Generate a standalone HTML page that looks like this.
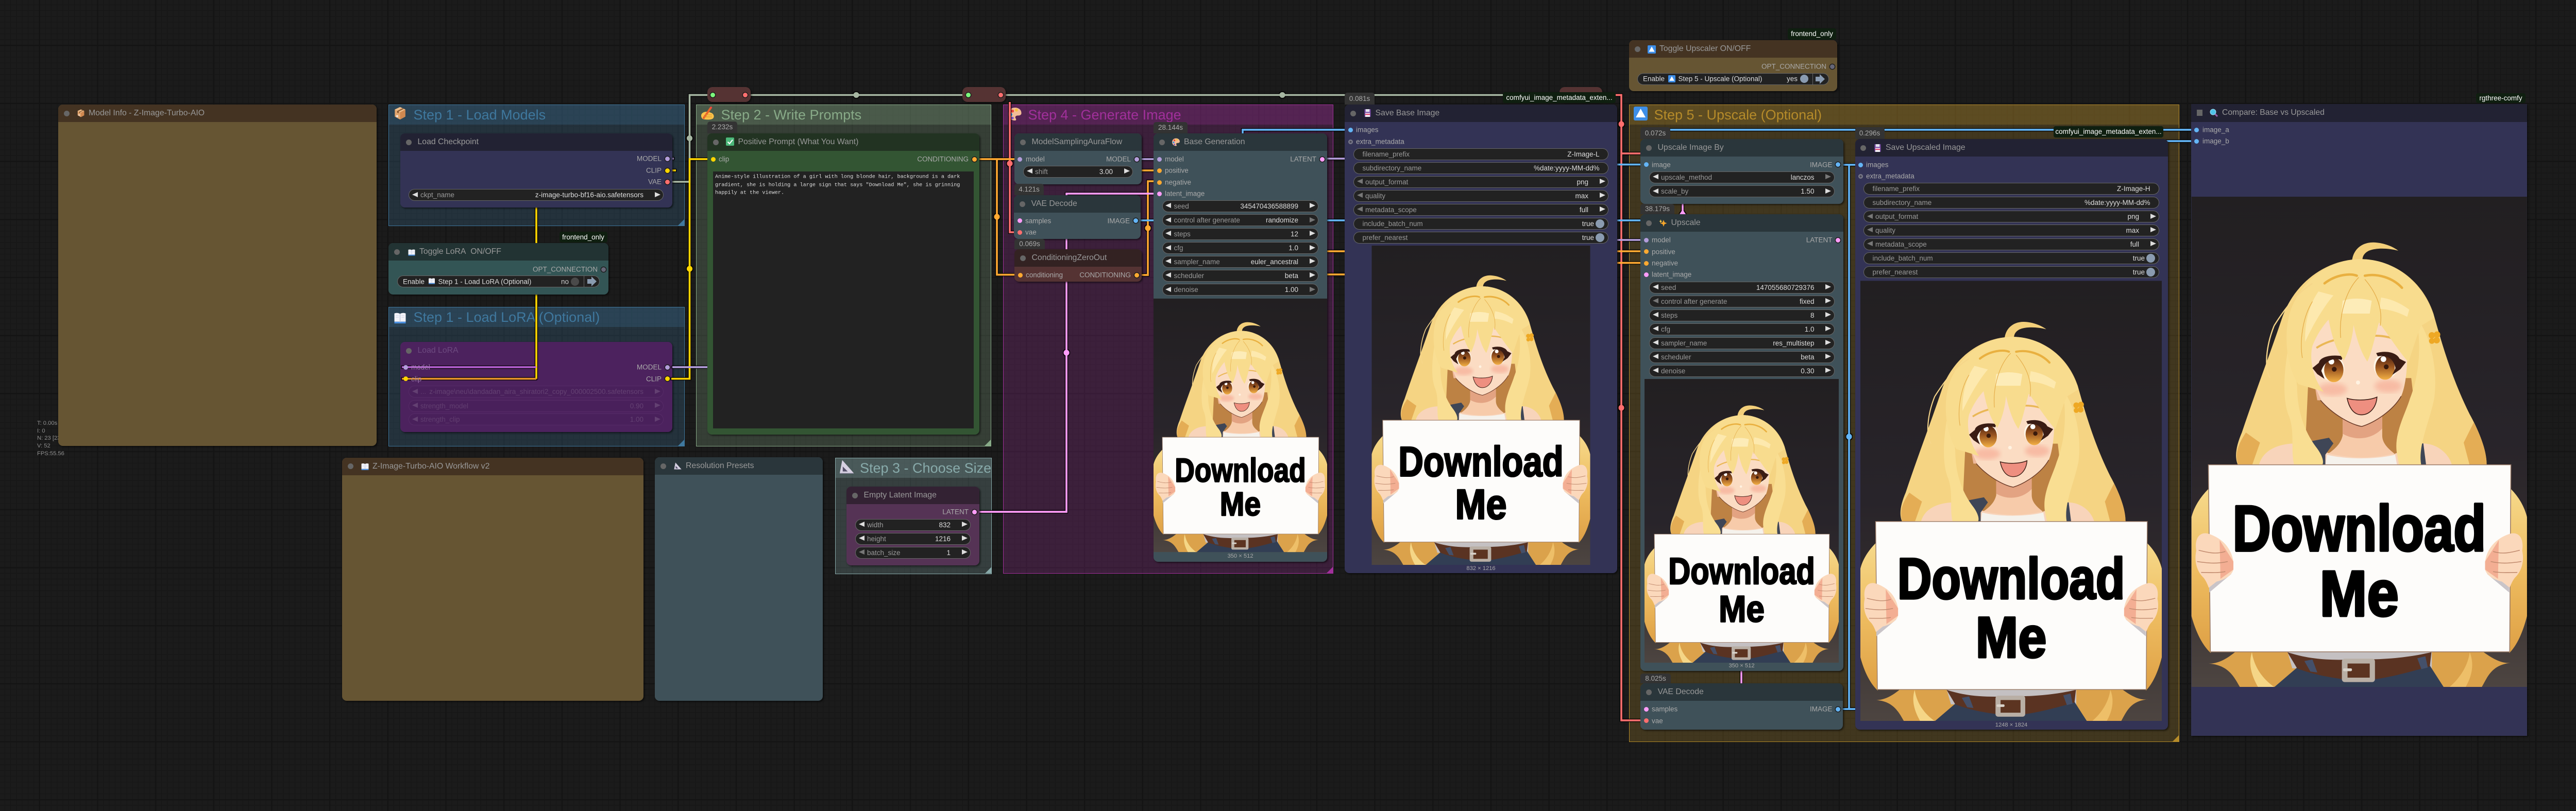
<!DOCTYPE html>
<html><head><meta charset="utf-8"><title>ComfyUI Z-Image-Turbo-AIO Workflow</title>
<style>
html,body{margin:0;padding:0}
body{position:relative;width:5017px;height:1575px;overflow:hidden;font-family:"Liberation Sans",sans-serif;background-color:#1b1b1b;
background-image:linear-gradient(90deg,#141414 2.6px,transparent 2.6px),linear-gradient(#141414 2.6px,transparent 2.6px),linear-gradient(90deg,#171717 1.3px,transparent 1.3px),linear-gradient(#171717 1.3px,transparent 1.3px);
background-size:112.7px 112.7px,112.7px 112.7px,11.27px 11.27px,11.27px 11.27px;
background-position:75.5px 0,0 87px,8.6px 0,0 8.6px}
.g{position:absolute;box-sizing:border-box;border:1px solid currentColor;overflow:hidden}
.gh{height:38px;line-height:38px;font-size:27px;padding-left:47.5px;background:inherit;white-space:nowrap}
.g::after{content:"";position:absolute;right:0;bottom:0;width:12px;height:12px;background:currentColor;clip-path:polygon(100% 0,100% 100%,0 100%)}
.n{position:absolute;border-radius:9px;box-shadow:2px 2px 3px rgba(0,0,0,.55);background:var(--b)}
.h{position:relative;height:34px;line-height:34px;background:var(--t);border-radius:9px 9px 0 0;color:#999;font-size:15.8px;padding-left:33.5px;white-space:nowrap;border-bottom:0}
.h::before{content:"";position:absolute;left:10.5px;top:11.5px;width:11px;height:11px;border-radius:50%;background:#666}
.br{--t:#443322;--b:#665533}.bl{--t:#222233;--b:#333355}.gr{--t:#223322;--b:#335533}.pb{--t:#2a363b;--b:#3f5159}.cy{--t:#223333;--b:#335555}.rd{--t:#332222;--b:#553333}.pu{--t:#332233;--b:#553355}
.d{position:absolute;width:9px;height:9px;margin:-4.5px 0 0 -4.5px;border-radius:50%}
.o{box-shadow:0 0 0 1.4px #1c1c1c}
.l,.r{position:absolute;color:#aaa;font-size:13.5px;transform:translateY(-50%);white-space:nowrap}
.r{transform:translate(-100%,-50%)}
.w{position:absolute;box-sizing:border-box;height:23px;margin-top:-11.5px;border-radius:12px;background:#222;border:1px solid #666;color:#999;font-size:13.5px;line-height:21px;white-space:nowrap}
.w span{position:absolute;left:22px}
.w i{position:absolute;right:38px;font-style:normal;color:#ddd}
.w::before{content:"";position:absolute;left:5.5px;top:4.8px;border:5.7px solid transparent;border-left:0;border-right:11px solid #ddd}
.w::after{content:"";position:absolute;right:5.5px;top:4.8px;border:5.7px solid transparent;border-right:0;border-left:11px solid #ddd}
.w.ld::before{border-right-color:#777}.w.rd2::after{border-left-color:#777}
.w.x::before,.w.x::after{display:none}
.w.x span{left:16.5px}.w.x i{right:16.5px}
.w.t i{right:27px}
.w u{position:absolute;right:7.5px;top:2px;width:17px;height:17px;border-radius:50%;background:#8a9bb0}
.tag{position:absolute;background:#0f1f10;color:#fff;font-size:13.5px;border-radius:4px;text-align:center;white-space:nowrap;overflow:hidden}
.bd{position:absolute;background:#333;color:#aaa;font-size:13.5px;border-radius:5px 5px 0 0;text-align:center}
.ic{position:absolute;overflow:visible}
.cap{position:absolute;color:#aaa;font-size:11.2px;transform:translate(-50%,-50%);white-space:nowrap}
.img{position:absolute}
.s1{font-family:"Liberation Sans",sans-serif;font-weight:bold;font-size:160px;fill:#000;stroke:#000;stroke-width:6;stroke-linejoin:round}
.mono{position:absolute;font-family:"Liberation Mono",monospace;font-size:10.17px;color:#ddd;white-space:pre;transform:translateY(-50%)}
.st{position:absolute;left:72px;color:#8f8f8f;font-size:11.2px;transform:translateY(-50%);white-space:nowrap}
.pill{position:absolute;background:#553333;border-radius:10px;box-shadow:2px 2px 3px rgba(0,0,0,.5)}
.tx{position:absolute;transform:translateY(-50%);white-space:nowrap;font-size:13.5px;color:#ddd}
</style></head><body>

<svg width="0" height="0" style="position:absolute">
<defs>
<linearGradient id="bg" x1="0" y1="0" x2="0" y2="1"><stop offset="0" stop-color="#221f21"/><stop offset=".5" stop-color="#28242a"/><stop offset=".72" stop-color="#332c2d"/><stop offset="1" stop-color="#4d4541"/></linearGradient>
<linearGradient id="h2" x1="0" y1="0" x2="0" y2="1"><stop offset="0" stop-color="#f6d98a"/><stop offset=".5" stop-color="#eebc60"/><stop offset="1" stop-color="#dea045"/></linearGradient>
<linearGradient id="eye" x1="0" y1="0" x2="0" y2="1"><stop offset="0" stop-color="#4e2412"/><stop offset=".45" stop-color="#9a5520"/><stop offset="1" stop-color="#f3b044"/></linearGradient>
<filter id="ol" filterUnits="userSpaceOnUse" x="0" y="0" width="5017" height="1575"><feMorphology in="SourceAlpha" operator="dilate" radius="1.4" result="m"/><feFlood flood-color="#000" flood-opacity=".85"/><feComposite in2="m" operator="in" result="b"/><feMerge><feMergeNode in="b"/><feMergeNode in="SourceGraphic"/></feMerge></filter>
<filter id="bl"><feGaussianBlur stdDeviation="6"/></filter>
</defs>
<symbol id="box" viewBox="0 0 24 28"><polygon points="12,1 23,6 23,21 12,27 1,21 1,6" fill="#e3a56d"/><polygon points="12,1 23,6 12,12 1,6" fill="#edbe8c"/><polygon points="23,6 23,21 12,27 12,12" fill="#cf8850"/><polygon points="6,9 17,3.5 20,4.8 9,10.5" fill="#8f5d33"/><polygon points="6,9 9,10.5 9,14 6,12.5" fill="#7a4e2a"/><rect x="4" y="18" width="4" height="4" fill="#f2e6e0"/></symbol>
<symbol id="book" viewBox="0 0 28 26"><path d="M1 2C6 0 11 1 14 3C17 1 22 0 27 2V21H1Z" fill="#f4f4fa"/><path d="M1 21H27V25H1Z" fill="#4a90e2"/><path d="M14 3V22" stroke="#b9c3d8" stroke-width="1.5"/><path d="M4 7H11M4 11H11M17 7H24M17 11H24" stroke="#d9dded" stroke-width="1.5"/></symbol>
<symbol id="hand" viewBox="0 0 27 26"><path d="M2 14C6 9 14 9 20 12C26 14 27 20 24 23C20 26 10 26 4 24C1 22 0 17 2 14Z" fill="#fbc24a"/><path d="M6 22L20 2" stroke="#e8622a" stroke-width="4" stroke-linecap="round"/><path d="M19 3L21 1" stroke="#ef4444" stroke-width="4"/><path d="M9 16H22M7 20H22" stroke="#e09a2c" stroke-width="1.3"/></symbol>
<symbol id="chk" viewBox="0 0 16 16"><rect width="16" height="16" rx="2" fill="#4cb87a"/><path d="M3.5 8.5L7 12L13 4.5" fill="none" stroke="#fff" stroke-width="2.2"/></symbol>
<symbol id="pal" viewBox="0 0 28 28"><path d="M14 1C6 1 1 7 1 14C1 22 7 27 14 27C17 27 17 24 15 22C14 19 16 17 20 17C25 17 27 15 27 12C27 5 21 1 14 1Z" fill="#f3bd96"/><circle cx="9" cy="8" r="3" fill="#e8443a"/><circle cx="17" cy="6" r="3" fill="#f6c33c"/><circle cx="6" cy="15" r="3" fill="#3e8ee0"/><circle cx="9" cy="22" r="2.6" fill="#7a4fc4"/></symbol>
<symbol id="flop" viewBox="0 0 16 20"><rect width="16" height="20" rx="1" fill="#7b4ea8"/><rect x="3" y="0" width="10" height="7" fill="#e3e3ee"/><rect x="2" y="10" width="12" height="10" fill="#f4f4f8"/><rect x="2" y="12" width="12" height="3" fill="#e0436d"/></symbol>
<symbol id="up" viewBox="0 0 27 27"><rect width="27" height="27" rx="3" fill="#3d8ee8"/><polygon points="13.5,4 23,21 4,21" fill="#fff"/></symbol>
<symbol id="spk" viewBox="0 0 16 16"><path d="M9 1L11 6L16 8L11 10L9 15L7 10L2 8L7 6Z" fill="#f6a62b"/><path d="M3 0L4 3L6.5 4L4 5L3 8L2 5L0 4L2 3Z" fill="#fbd04e"/></symbol>
<symbol id="mag" viewBox="0 0 16 16"><circle cx="6.5" cy="6.5" r="5.5" fill="#4fc3e8" stroke="#9adcf0"/><path d="M10.5 10.5L15 15" stroke="#9b5ca8" stroke-width="3"/></symbol>
<symbol id="tri" viewBox="0 0 30 27"><path d="M6 0L29 26H1Z" fill="#d6d0e2"/><path d="M7 13L17 23H7Z" fill="#55506a"/><path d="M1 26H29V27H1Z" fill="#a89fbd"/></symbol>
<symbol id="hnd" viewBox="0 0 832 1216"><path d="M104 905C100 880 85 850 42 836C20 830 7 848 12 878C6 905 14 930 30 945C38 955 42 968 43 970L62 955C82 950 100 940 104 925Z" fill="#fbd8bb"/><path d="M70 852L104 905V925L72 948Z" fill="#f1a489" opacity=".8"/><path d="M18 877C38 882 60 888 84 880M14 905C35 908 60 912 90 905M24 932C40 932 62 934 84 930" fill="none" stroke="#c08a6e" stroke-width="2"/></symbol>
<symbol id="girl" viewBox="0 0 832 1216">
<rect width="832" height="1216" fill="url(#bg)"/>
<path d="M42 725C22 745 6 770 0 795V1040C15 1095 35 1120 48 1132Z" fill="url(#h2)"/>
<path d="M792 725C812 745 826 770 832 795V1040C818 1095 800 1120 788 1132Z" fill="url(#h2)"/>
<path d="M40 1158C65 1160 90 1145 110 1128L240 1128L262 1170L215 1216H120C105 1190 90 1160 40 1158Z" fill="#dba24b"/>
<path d="M795 1156C770 1160 745 1145 722 1128L592 1128L591 1165L625 1216H720C735 1190 745 1160 795 1156Z" fill="#dba24b"/>
<path d="M150 1130C155 1165 175 1195 205 1216H165C150 1190 140 1160 150 1130Z" fill="#f5d686"/>
<path d="M690 1130C685 1165 665 1195 640 1216H680C695 1190 702 1160 690 1130Z" fill="#eebf68"/>
<path d="M238 1128H596V1170H250Z" fill="#c4c0c2"/>
<path d="M206 1216L262 1168L591 1163L625 1216Z" fill="#323e54"/>
<path d="M238 1130C300 1150 350 1150 420 1148C500 1148 550 1140 595 1130L591 1165C520 1185 470 1198 420 1200C360 1198 300 1185 262 1170Z" fill="#5a3322"/>
<path d="M280 1152L300 1148L312 1180L295 1178ZM560 1145L580 1140L586 1168L570 1172Z" fill="#44506a"/>
<rect x="373" y="1146" width="82" height="58" rx="7" fill="#b9afa5"/><rect x="387" y="1158" width="55" height="35" fill="#5c3421"/><rect x="376" y="1170" width="22" height="7" rx="3" fill="#d9d3cb"/>
<path d="M398 159C402 125 430 110 460 114C480 116 500 124 513 134C490 128 460 126 440 134C428 140 424 148 424 158Z" fill="#f3cf7a"/>
<path d="M413 155C330 158 255 215 225 300C195 390 160 480 125 585C112 615 105 645 116 667L732 667C732 630 715 585 690 540C650 460 625 380 600 290C570 200 490 152 413 155Z" fill="#f5d483"/>
<path d="M116 667C108 640 112 620 135 585L170 610L150 667Z" fill="#e4ad55"/>
<path d="M732 667C732 640 725 610 700 560L675 610L690 667Z" fill="#e4ad55"/>
<path d="M290 450L280 667H570L545 450Z" fill="#bd8244"/>
<path d="M167 667C175 632 210 612 262 612L340 636C375 624 470 624 503 638L572 612C612 612 640 640 646 667Z" fill="#f8d4ba"/>
<path d="M273 618L300 606L341 598L352 612L332 640V667H270Z" fill="#3f4656"/>
<path d="M528 614L575 612L582 667H535Z" fill="#3f4656"/>
<path d="M336 640C380 652 460 652 505 640L510 667H332Z" fill="#f5f2ec"/>
<path d="M375 540V592C370 615 352 628 340 637C400 650 450 650 503 637C488 625 473 612 473 592V540Z" fill="#f7cbaa"/>
<path d="M375 545V588C410 608 450 600 473 575V545Z" fill="#e3a382"/>
<path d="M295 330C295 420 300 470 320 505C350 540 395 565 422 570C455 560 500 530 520 495C535 460 537 400 535 330C535 260 295 260 295 330Z" fill="#fbdcc3"/>
<path d="M306 470L322 505L312 505Z" fill="#eeb99b"/>
<path d="M320 505C350 540 395 565 422 570C455 560 500 530 520 495" fill="none" stroke="#6a3a28" stroke-width="2"/>
<ellipse cx="350" cy="478" rx="36" ry="16" fill="#f4a08a" opacity=".55" filter="url(#bl)"/>
<ellipse cx="488" cy="470" rx="34" ry="16" fill="#f4a08a" opacity=".55" filter="url(#bl)"/>
<ellipse cx="348" cy="426" rx="31" ry="31" fill="#fff6e8"/>
<ellipse cx="353" cy="430" rx="24" ry="30" fill="url(#eye)"/><circle cx="354" cy="428" r="6" fill="#3a1a0c"/><circle cx="347" cy="409" r="7" fill="#fff"/>
<ellipse cx="482" cy="420" rx="30" ry="31" fill="#fff6e8"/>
<ellipse cx="480" cy="424" rx="24" ry="30" fill="url(#eye)"/><circle cx="483" cy="422" r="6" fill="#3a1a0c"/><circle cx="476" cy="403" r="7" fill="#fff"/>
<path d="M300 425L316 412C318 398 345 390 376 396L372 405C350 398 330 408 322 432L330 452L312 440Z" fill="#3a1c14"/>
<path d="M532 410L516 402C510 388 485 380 458 388L462 396C485 392 500 400 506 425L498 442L518 428Z" fill="#3a1c14"/>
<path d="M310 375C330 362 355 354 380 351" fill="none" stroke="#eab755" stroke-width="5"/>
<path d="M452 345C475 344 500 350 522 360" fill="none" stroke="#eab755" stroke-width="5"/>
<circle cx="413" cy="461" r="5" fill="#fff3e2"/>
<path d="M386 500C405 506 440 506 460 497C458 525 440 542 420 541C400 540 390 520 386 500Z" fill="#ee8f80" stroke="#3a1c14" stroke-width="2"/>
<path d="M300 260C262 340 255 420 262 470C262 540 285 590 312 625C330 650 328 665 322 667H255C245 630 258 580 240 540C222 490 232 400 250 330Z" fill="#f9de92"/>
<path d="M558 300C572 380 562 450 542 500C530 540 500 590 510 640L515 667H570C560 620 590 560 602 500C612 420 590 340 558 300Z" fill="#f9de92"/>
<path d="M413 155C340 158 270 210 245 285C225 350 240 430 265 465L328 484C300 450 292 400 300 370C310 345 322 325 340 305C348 345 358 380 378 406C392 380 400 345 402 318C410 355 420 385 436 409C448 385 455 345 465 312C490 345 515 385 538 410C552 370 560 340 570 320L602 300C570 200 490 152 413 155Z" fill="#f8dc8e"/>
<path d="M315 235C290 270 280 320 282 360C300 320 330 270 352 245Z" fill="#fde9ae"/>
<path d="M375 258C400 250 425 252 447 258L442 290H372Z" fill="#fdecb8"/>
<path d="M470 250C495 254 515 262 540 280L535 298C510 285 490 280 466 278Z" fill="#fde9ae"/>
<path d="M330 215C360 192 395 190 410 196M430 196C460 190 498 200 522 226" fill="none" stroke="#e9b040" stroke-width="6" stroke-linecap="round"/>
<path d="M415 200C385 230 365 290 370 350M430 205C460 240 475 280 468 320M300 260C275 300 268 360 275 400" fill="none" stroke="#e4ab48" stroke-width="1.6"/>
<path d="M205 320C185 370 180 425 195 450M205 320C230 280 260 240 300 215" fill="none" stroke="#f6d68a" stroke-width="3"/>
<g fill="#eea824"><circle cx="596" cy="344" r="8"/><circle cx="609" cy="342" r="8"/><circle cx="608" cy="356" r="8"/><circle cx="596" cy="358" r="7"/></g>
<path d="M42 665L792 665L789 1129L47 1129Z" fill="#fdfcfa" stroke="#9a7a66" stroke-width="2"/>
<polygon points="44,962 100,935 44,982" fill="#c9c4c8"/>
<polygon points="788,962 732,935 788,982" fill="#c9c4c8"/>
<use href="#hnd" width="832" height="1216"/>
<use href="#hnd" width="832" height="1216" transform="translate(832,0) scale(-1,1)"/>
</symbol>
</svg>

<!-- stats -->
<div class="st" style="top:822px">T: 0.00s</div>
<div class="st" style="top:836.6px">I: 0</div>
<div class="st" style="top:851px">N: 23 [23]</div>
<div class="st" style="top:866px">V: 52</div>
<div class="st" style="top:880.6px">FPS:55.56</div>

<!-- groups -->
<div class="g" style="left:754px;top:203px;width:575px;height:236px;color:#3f789e;background:#3f789e40"><div class="gh">Step 1 - Load Models</div></div>
<div class="g" style="left:754px;top:596px;width:575px;height:271px;color:#3f789e;background:#3f789e40"><div class="gh">Step 1 - Load LoRA (Optional)</div></div>
<div class="g" style="left:1351px;top:203px;width:573px;height:664px;color:#88aa88;background:#88aa8840"><div class="gh">Step 2 - Write Prompts</div></div>
<div class="g" style="left:1620.5px;top:888.5px;width:304.5px;height:226px;color:#88aaaa;background:#88aaaa40"><div class="gh">Step 3 - Choose Size</div></div>
<div class="g" style="left:1947px;top:203px;width:641px;height:911px;color:#a1309b;background:#a1309b40"><div class="gh">Step 4 - Generate Image</div></div>
<div class="g" style="left:3162px;top:203px;width:1068px;height:1238px;color:#b58b2a;background:#b58b2a40"><div class="gh">Step 5 - Upscale (Optional)</div></div>
<svg class="ic" style="left:765px;top:207px;width:23px;height:26px"><use href="#box" width="23" height="26"/></svg>
<svg class="ic" style="left:763px;top:607px;width:27px;height:22px"><use href="#book" width="27" height="22"/></svg>
<svg class="ic" style="left:1360px;top:207px;width:27px;height:26px"><use href="#hand" width="27" height="26"/></svg>
<svg class="ic" style="left:1629px;top:893px;width:29px;height:27px"><use href="#tri" width="29" height="27"/></svg>
<svg class="ic" style="left:1956px;top:208px;width:28px;height:27px"><use href="#pal" width="28" height="27"/></svg>
<svg class="ic" style="left:3171px;top:207px;width:27px;height:27px"><use href="#up" width="27" height="27"/></svg>

<!-- Load LoRA (bypassed, under wires) -->
<div class="n" style="left:777px;top:664px;width:528px;height:175px;background:#4c225e"><div class="h" style="background:#4c225e;color:#6d4a80">Load LoRA</div></div>
<div style="opacity:.16">
<div class="w" style="left:793px;top:760.5px;width:495px;background:#3c1a4c;border-color:#8a5a9a"><span style="color:#ccc">...</span><i style="color:#ddd">z-image\neu\dandadan_aira_shiratori2_copy_000002500.safetensors</i></div>
<div class="w" style="left:793px;top:788px;width:495px;background:#3c1a4c;border-color:#8a5a9a"><span style="color:#ccc">strength_model</span><i>0.90</i></div>
<div class="w" style="left:793px;top:814.6px;width:495px;background:#3c1a4c;border-color:#8a5a9a"><span style="color:#ccc">strength_clip</span><i>1.00</i></div>
</div>

<!-- wires -->
<svg style="position:absolute;left:0;top:0" width="5017" height="1575">
<g filter="url(#ol)" fill="none" stroke-width="3.4">
<g stroke="#a6b6a2"><path d="M1300 353H1338.5V184.5H2917"/></g>
<g stroke="#ff6e6e"><path d="M1960 198V451H1979"/><path d="M3125 184.5H3147V1399H3195"/><path d="M3147 298H3190"/></g>
<g stroke="#ffd500"><path d="M1303 735.6H1338.5V309H1384"/><path d="M1041 400V735.6"/><path d="M1295 331H1312"/></g>
<path stroke="#e8952a" d="M780 735.6H1041"/>
<path stroke="#b45fd1" d="M780 713H1041"/>
<g stroke="#b39ddb"><path d="M1305 713H1373"/><path d="M1295 308H1308"/><path d="M2216 309H2240"/><path d="M2570 308H2650"/><path d="M3100 466H3195"/></g>
<g stroke="#ffa931"><path d="M1891 309H1969"/><path d="M1935 309V533.5H1980"/><path d="M2206 534H2228V352H2250"/><path d="M2210 331H2250"/><path d="M2570 488H2650"/><path d="M3100 488H3190"/><path d="M2570 533H2650"/><path d="M3100 510.5H3190"/></g>
<g stroke="#64b5f6"><path d="M2204 428H2250"/><path d="M2570 428H2650"/><path d="M3100 428H3190"/><path d="M3100 319.5H3195"/><path d="M2412 262V252H2621"/><path d="M3560 320H3589V1377H3560"/><path d="M3589 320H3611"/><path d="M3589 1377H3606"/><path d="M3230 252H4263"/><path d="M4190 274H4263"/></g>
<g stroke="#ff9cf9"><path d="M1891 994H2070V376H2250"/><path d="M3266 396V412"/><path d="M3380 1303V1330"/></g>
<g stroke="none">
<ellipse cx="1338.5" cy="268.5" rx="5.5" ry="5.5" fill="#a6b6a2"/><ellipse cx="1662" cy="184.5" rx="5.5" ry="5.5" fill="#a6b6a2"/><ellipse cx="2489" cy="184.5" rx="5.5" ry="5.5" fill="#a6b6a2"/>
<circle cx="1960" cy="317.5" r="5.5" fill="#ff6e6e"/><circle cx="3147" cy="241" r="5.5" fill="#ff6e6e"/><circle cx="3147" cy="792" r="5.5" fill="#ff6e6e"/>
<circle cx="1338.5" cy="522" r="5.5" fill="#ffd500"/>
<circle cx="1935" cy="421" r="5.5" fill="#ffa931"/><circle cx="2228" cy="443" r="5.5" fill="#ffa931"/>
<circle cx="3589" cy="848" r="5.5" fill="#64b5f6"/>
<circle cx="2070" cy="685" r="5.5" fill="#ff9cf9"/>
<polygon points="3260,416 3272,416 3266,407" fill="#ff9cf9"/>
</g>
</g>
</svg>

<!-- pills -->
<div class="pill" style="left:1373px;top:169px;width:84px;height:29px"></div>
<div class="d o" style="left:1383.7px;top:184.5px;background:#7cf77c"></div><div class="d o" style="left:1446.7px;top:184.5px;background:#ff6e6e"></div>
<div class="pill" style="left:1868px;top:169px;width:84px;height:29px"></div>
<div class="d o" style="left:1879px;top:184.5px;background:#7cf77c"></div><div class="d o" style="left:1942px;top:184.5px;background:#ff6e6e"></div>
<div class="pill" style="left:3027px;top:169px;width:83px;height:29px"></div>

<!-- Load LoRA slots -->
<div class="d" style="left:787px;top:713px;background:#b39ddb"></div><div class="l" style="left:798px;top:713px;color:#a47bb5">model</div>
<div class="d" style="left:787px;top:735.6px;background:#ffd500"></div><div class="l" style="left:798px;top:735.6px;color:#a47bb5">clip</div>
<div class="r" style="left:1284px;top:713px">MODEL</div><div class="d o" style="left:1295px;top:713px;background:#b39ddb"></div>
<div class="r" style="left:1284px;top:735.6px">CLIP</div><div class="d o" style="left:1295px;top:735.6px;background:#ffd500"></div>

<!-- Model Info -->
<div class="n br" style="left:113px;top:203px;width:618px;height:663px"><div class="h" style="padding-left:59px">Model Info - Z-Image-Turbo-AIO</div></div>
<svg class="ic" style="left:150px;top:212px;width:14px;height:16px"><use href="#box" width="14" height="16"/></svg>

<!-- Load Checkpoint -->
<div class="n bl" style="left:777px;top:259px;width:528px;height:144px"><div class="h">Load Checkpoint</div></div>
<div class="r" style="left:1284px;top:308px">MODEL</div><div class="d o" style="left:1295px;top:308px;background:#b39ddb"></div>
<div class="r" style="left:1284px;top:331px">CLIP</div><div class="d o" style="left:1295px;top:331px;background:#ffd500"></div>
<div class="r" style="left:1284px;top:353px">VAE</div><div class="d o" style="left:1295px;top:353px;background:#ff6e6e"></div>
<div class="w" style="left:793px;top:378.5px;width:495px"><span>ckpt_name</span><i>z-image-turbo-bf16-aio.safetensors</i></div>

<!-- Toggle LoRA -->
<div class="tag" style="left:1085.5px;top:449.5px;width:93px;height:21px;line-height:21px">frontend_only</div>
<div class="n cy" style="left:754px;top:472px;width:427px;height:100px"><div class="h" style="padding-left:60px">Toggle LoRA&nbsp; ON/OFF</div></div>
<svg class="ic" style="left:791px;top:484px;width:16px;height:13px"><use href="#book" width="16" height="13"/></svg>
<div class="r" style="left:1160px;top:523px">OPT_CONNECTION</div><div class="d o" style="left:1171px;top:523px;background:#667"></div>
<div class="w x" style="left:771px;top:546.5px;width:393px"></div>
<div class="tx" style="left:782px;top:546.5px">Enable</div>
<svg class="ic" style="left:831px;top:540px;width:14px;height:12px"><use href="#book" width="14" height="12"/></svg>
<div class="tx" style="left:850.5px;top:546.5px">Step 1 - Load LoRA (Optional)</div>
<div class="r" style="left:1104px;top:546.5px;color:#ccc">no</div>
<div class="d" style="left:1116px;top:546.5px;width:16px;height:16px;margin:-8px 0 0 -8px;background:#4a4a4a"></div>
<div style="position:absolute;left:1133px;top:536px;width:1px;height:21px;background:#666"></div>
<svg class="ic" style="left:1140px;top:537px;width:19px;height:19px"><path d="M0 5H8V0L18 9.5L8 19V14H0Z" fill="#8a9bb0"/></svg>

<!-- Positive prompt -->
<div class="bd" style="left:1373px;top:236px;width:58px;height:23px;line-height:22px">2.232s</div>
<div class="n gr" style="left:1373px;top:259px;width:528px;height:585px"><div class="h" style="padding-left:59.5px">Positive Prompt (What You Want)</div></div>
<svg class="ic" style="left:1409px;top:267px;width:16px;height:16px"><use href="#chk" width="16" height="16"/></svg>
<div class="d" style="left:1384px;top:309px;background:#ffd500"></div><div class="l" style="left:1395px;top:309px">clip</div>
<div class="r" style="left:1880px;top:309px">CONDITIONING</div><div class="d o" style="left:1891px;top:309px;background:#ffa931"></div>
<div style="position:absolute;left:1384px;top:333px;width:506px;height:499px;background:#222"></div>
<div class="mono" style="left:1388px;top:344px">Anime-style illustration of a girl with long blonde hair, background is a dark</div>
<div class="mono" style="left:1388px;top:360px">gradient, she is holding a large sign that says "Download Me", she is grinning</div>
<div class="mono" style="left:1388px;top:375px">happily at the viewer.</div>

<!-- Empty latent -->
<div class="n pu" style="left:1643px;top:945px;width:258px;height:153px"><div class="h">Empty Latent Image</div></div>
<div class="r" style="left:1880px;top:994px">LATENT</div><div class="d o" style="left:1891px;top:994px;background:#ff9cf9"></div>
<div class="w" style="left:1660px;top:1019px;width:224px"><span>width</span><i>832</i></div>
<div class="w" style="left:1660px;top:1046px;width:224px"><span>height</span><i>1216</i></div>
<div class="w ld" style="left:1660px;top:1073px;width:224px"><span>batch_size</span><i>1</i></div>

<!-- Workflow + Resolution -->
<div class="n br" style="left:664px;top:888.5px;width:585px;height:472.5px"><div class="h" style="padding-left:59px">Z-Image-Turbo-AIO Workflow v2</div></div>
<svg class="ic" style="left:701px;top:899px;width:15px;height:15px"><use href="#book" width="15" height="15"/></svg>
<div class="n pb" style="left:1271px;top:888px;width:326px;height:473px"><div class="h" style="padding-left:60px">Resolution Presets</div></div>
<svg class="ic" style="left:1308px;top:897px;width:15px;height:16px"><use href="#tri" width="15" height="16"/></svg>

<!-- ModelSamplingAuraFlow -->
<div class="n pb" style="left:1969px;top:259px;width:247px;height:99px"><div class="h">ModelSamplingAuraFlow</div></div>
<div class="d" style="left:1979.5px;top:309px;background:#b39ddb"></div><div class="l" style="left:1991px;top:309px">model</div>
<div class="r" style="left:2195px;top:309px">MODEL</div><div class="d o" style="left:2206px;top:309px;background:#b39ddb"></div>
<div class="w" style="left:1986px;top:333px;width:213px"><span>shift</span><i>3.00</i></div>

<div class="bd" style="left:1969px;top:357px;width:57px;height:22px;line-height:22px">4.121s</div>
<!-- VAE Decode 1 -->
<div class="n pb" style="left:1968px;top:379px;width:246px;height:85px"><div class="h">VAE Decode</div></div>
<div class="d" style="left:1979px;top:428.5px;background:#ff9cf9"></div><div class="l" style="left:1990px;top:428.5px">samples</div>
<div class="d" style="left:1979px;top:451px;background:#ff6e6e"></div><div class="l" style="left:1990px;top:451px">vae</div>
<div class="r" style="left:2193px;top:428.5px">IMAGE</div><div class="d o" style="left:2204px;top:428.5px;background:#64b5f6"></div>

<div class="bd" style="left:1969px;top:464px;width:59px;height:20px;line-height:20px">0.069s</div>
<!-- ConditioningZeroOut -->
<div class="n rd" style="left:1969px;top:484px;width:247px;height:63px"><div class="h">ConditioningZeroOut</div></div>
<div class="d" style="left:1980px;top:534px;background:#ffa931"></div><div class="l" style="left:1991px;top:534px">conditioning</div>
<div class="r" style="left:2195px;top:534px">CONDITIONING</div><div class="d o" style="left:2206px;top:534px;background:#ffa931"></div>

<!-- Base Generation -->
<div class="bd" style="left:2239px;top:237px;width:66px;height:22px;line-height:22px">28.144s</div>
<div class="n pb" style="left:2239px;top:259px;width:337px;height:832px"><div class="h" style="padding-left:59px">Base Generation</div></div>
<svg class="ic" style="left:2274px;top:268px;width:17px;height:16px"><use href="#pal" width="17" height="16"/></svg>
<div class="d" style="left:2250px;top:309px;background:#b39ddb"></div><div class="l" style="left:2261px;top:309px">model</div>
<div class="d" style="left:2250px;top:331px;background:#ffa931"></div><div class="l" style="left:2261px;top:331px">positive</div>
<div class="d" style="left:2250px;top:354px;background:#ffa931"></div><div class="l" style="left:2261px;top:354px">negative</div>
<div class="d" style="left:2250px;top:376px;background:#ff9cf9"></div><div class="l" style="left:2261px;top:376px">latent_image</div>
<div class="r" style="left:2555px;top:309px">LATENT</div><div class="d o" style="left:2566px;top:309px;background:#ff9cf9"></div>
<div class="w" style="left:2255.5px;top:400px;width:303.5px"><span>seed</span><i>345470436588899</i></div>
<div class="w rd2" style="left:2255.5px;top:427.5px;width:303.5px"><span>control after generate</span><i>randomize</i></div>
<div class="w" style="left:2255.5px;top:454px;width:303.5px"><span>steps</span><i>12</i></div>
<div class="w" style="left:2255.5px;top:481.5px;width:303.5px"><span>cfg</span><i>1.0</i></div>
<div class="w" style="left:2255.5px;top:508px;width:303.5px"><span>sampler_name</span><i>euler_ancestral</i></div>
<div class="w" style="left:2255.5px;top:535px;width:303.5px"><span>scheduler</span><i>beta</i></div>
<div class="w rd2" style="left:2255.5px;top:562.5px;width:303.5px"><span>denoise</span><i>1.00</i></div>
<svg class="img" style="left:2239px;top:579px;width:337px;height:494px" viewBox="0 0 832 1216"><use href="#girl" width="832" height="1216"/><text class="s1" x="102" y="878" textLength="628" lengthAdjust="spacingAndGlyphs">Download</text><text class="s1" x="318" y="1040" textLength="196" lengthAdjust="spacingAndGlyphs">Me</text></svg>
<div class="cap" style="left:2407.5px;top:1080px">350 × 512</div>

<!-- Save Base Image -->
<div class="bd" style="left:2610px;top:180px;width:58px;height:23px;line-height:23px">0.081s</div>
<div class="n bl" style="left:2610px;top:203px;width:529px;height:910px"><div class="h" style="padding-left:59.5px">Save Base Image</div></div>
<svg class="ic" style="left:2647px;top:212px;width:15px;height:15px"><use href="#flop" width="15" height="15"/></svg>
<div class="d" style="left:2621px;top:252px;background:#64b5f6"></div><div class="l" style="left:2632px;top:252px">images</div>
<div class="d" style="left:2621px;top:275px;background:#778;box-shadow:inset 0 0 0 2.5px #778,inset 0 0 0 5px #445"></div><div class="l" style="left:2632px;top:275px">extra_metadata</div>
<div class="w x" style="left:2627px;top:299px;width:495px"><span>filename_prefix</span><i>Z-Image-L</i></div>
<div class="w x" style="left:2627px;top:326px;width:495px"><span>subdirectory_name</span><i>%date:yyyy-MM-dd%</i></div>
<div class="w ld" style="left:2627px;top:353px;width:495px"><span>output_format</span><i>png</i></div>
<div class="w ld" style="left:2627px;top:380px;width:495px"><span>quality</span><i>max</i></div>
<div class="w ld" style="left:2627px;top:407px;width:495px"><span>metadata_scope</span><i>full</i></div>
<div class="w x t" style="left:2627px;top:434px;width:495px"><span>include_batch_num</span><i>true</i><u></u></div>
<div class="w x t" style="left:2627px;top:461px;width:495px"><span>prefer_nearest</span><i>true</i><u></u></div>
<svg class="img" style="left:2662px;top:477px;width:425px;height:620px" viewBox="0 0 832 1216"><use href="#girl" width="832" height="1216"/><text class="s1" x="102" y="878" textLength="628" lengthAdjust="spacingAndGlyphs">Download</text><text class="s1" x="318" y="1040" textLength="196" lengthAdjust="spacingAndGlyphs">Me</text></svg>
<div class="cap" style="left:2874.5px;top:1104px">832 × 1216</div>
<div class="tag" style="left:2917px;top:179px;width:219px;height:21px;line-height:21px">comfyui_image_metadata_exten...</div>

<!-- Toggle Upscaler -->
<div class="tag" style="left:3470px;top:55px;width:94px;height:22px;line-height:22px">frontend_only</div>
<div class="n br" style="left:3162px;top:78px;width:404px;height:99px"><div class="h" style="padding-left:59px">Toggle Upscaler ON/OFF</div></div>
<svg class="ic" style="left:3198px;top:88px;width:16px;height:16px"><use href="#up" width="16" height="16"/></svg>
<div class="r" style="left:3545px;top:129px">OPT_CONNECTION</div><div class="d o" style="left:3556px;top:129px;background:#667"></div>
<div class="w x" style="left:3178px;top:153px;width:372px"></div>
<div class="tx" style="left:3189px;top:153px">Enable</div>
<svg class="ic" style="left:3238px;top:146px;width:14px;height:14px"><use href="#up" width="14" height="14"/></svg>
<div class="tx" style="left:3257.5px;top:153px">Step 5 - Upscale (Optional)</div>
<div class="r" style="left:3489px;top:153px;color:#ddd">yes</div>
<div class="d" style="left:3502px;top:153px;width:16px;height:16px;margin:-8px 0 0 -8px;background:#8a9bb0"></div>
<div style="position:absolute;left:3518px;top:143px;width:1px;height:21px;background:#666"></div>
<svg class="ic" style="left:3524px;top:143.5px;width:19px;height:19px"><path d="M0 5H8V0L18 9.5L8 19V14H0Z" fill="#8a9bb0"/></svg>

<!-- Upscale Image By -->
<div class="bd" style="left:3184px;top:247px;width:58px;height:23px;line-height:23px">0.072s</div>
<div class="n pb" style="left:3184px;top:270px;width:394px;height:126px"><div class="h">Upscale Image By</div></div>
<div class="d" style="left:3195px;top:319.5px;background:#64b5f6"></div><div class="l" style="left:3206px;top:319.5px">image</div>
<div class="r" style="left:3556.5px;top:319.5px">IMAGE</div><div class="d o" style="left:3567.5px;top:319.5px;background:#64b5f6"></div>
<div class="w rd2" style="left:3201px;top:344px;width:359.5px"><span>upscale_method</span><i>lanczos</i></div>
<div class="w" style="left:3201px;top:371.5px;width:359.5px"><span>scale_by</span><i>1.50</i></div>

<!-- Upscale -->
<div class="bd" style="left:3184px;top:396px;width:66px;height:20px;line-height:20px">38.179s</div>
<div class="n pb" style="left:3184px;top:416px;width:394px;height:887px"><div class="h" style="padding-left:59.5px">Upscale</div></div>
<svg class="ic" style="left:3220px;top:426px;width:16px;height:15px"><use href="#spk" width="16" height="15"/></svg>
<div class="d" style="left:3195px;top:466px;background:#b39ddb"></div><div class="l" style="left:3206px;top:466px">model</div>
<div class="d" style="left:3195px;top:488.6px;background:#ffa931"></div><div class="l" style="left:3206px;top:488.6px">positive</div>
<div class="d" style="left:3195px;top:511px;background:#ffa931"></div><div class="l" style="left:3206px;top:511px">negative</div>
<div class="d" style="left:3195px;top:533px;background:#ff9cf9"></div><div class="l" style="left:3206px;top:533px">latent_image</div>
<div class="r" style="left:3556.5px;top:466px">LATENT</div><div class="d o" style="left:3567.5px;top:466px;background:#ff9cf9"></div>
<div class="w" style="left:3201px;top:558px;width:359.5px"><span>seed</span><i>147055680729376</i></div>
<div class="w ld" style="left:3201px;top:585px;width:359.5px"><span>control after generate</span><i>fixed</i></div>
<div class="w" style="left:3201px;top:612px;width:359.5px"><span>steps</span><i>8</i></div>
<div class="w" style="left:3201px;top:639px;width:359.5px"><span>cfg</span><i>1.0</i></div>
<div class="w" style="left:3201px;top:666px;width:359.5px"><span>sampler_name</span><i>res_multistep</i></div>
<div class="w" style="left:3201px;top:693px;width:359.5px"><span>scheduler</span><i>beta</i></div>
<div class="w" style="left:3201px;top:720px;width:359.5px"><span>denoise</span><i>0.30</i></div>
<svg class="img" style="left:3192px;top:736px;width:377px;height:551px" viewBox="0 0 832 1216"><use href="#girl" width="832" height="1216"/><text class="s1" x="102" y="878" textLength="628" lengthAdjust="spacingAndGlyphs">Download</text><text class="s1" x="318" y="1040" textLength="196" lengthAdjust="spacingAndGlyphs">Me</text></svg>
<div class="cap" style="left:3380.5px;top:1293px">350 × 512</div>

<!-- VAE Decode 2 -->
<div class="bd" style="left:3184px;top:1308px;width:59px;height:19px;line-height:19px">8.025s</div>
<div class="n pb" style="left:3184px;top:1327px;width:393px;height:90px"><div class="h">VAE Decode</div></div>
<div class="d" style="left:3195px;top:1377px;background:#ff9cf9"></div><div class="l" style="left:3206px;top:1377px">samples</div>
<div class="d" style="left:3195px;top:1399.5px;background:#ff6e6e"></div><div class="l" style="left:3206px;top:1399.5px">vae</div>
<div class="r" style="left:3556.5px;top:1377px">IMAGE</div><div class="d o" style="left:3567.5px;top:1377px;background:#64b5f6"></div>

<!-- Save Upscaled -->
<div class="bd" style="left:3600.5px;top:247px;width:57px;height:23px;line-height:23px">0.296s</div>
<div class="n bl" style="left:3600.5px;top:270px;width:607px;height:1147px"><div class="h" style="padding-left:59.5px">Save Upscaled Image</div></div>
<svg class="ic" style="left:3637px;top:280px;width:15px;height:15px"><use href="#flop" width="15" height="15"/></svg>
<div class="d" style="left:3611px;top:320px;background:#64b5f6"></div><div class="l" style="left:3622px;top:320px">images</div>
<div class="d" style="left:3611px;top:342px;background:#778;box-shadow:inset 0 0 0 2.5px #778,inset 0 0 0 5px #445"></div><div class="l" style="left:3622px;top:342px">extra_metadata</div>
<div class="w x" style="left:3617px;top:366.5px;width:574px"><span>filename_prefix</span><i>Z-Image-H</i></div>
<div class="w x" style="left:3617px;top:393px;width:574px"><span>subdirectory_name</span><i>%date:yyyy-MM-dd%</i></div>
<div class="w ld" style="left:3617px;top:420.5px;width:574px"><span>output_format</span><i>png</i></div>
<div class="w ld" style="left:3617px;top:447px;width:574px"><span>quality</span><i>max</i></div>
<div class="w ld" style="left:3617px;top:474px;width:574px"><span>metadata_scope</span><i>full</i></div>
<div class="w x t" style="left:3617px;top:501px;width:574px"><span>include_batch_num</span><i>true</i><u></u></div>
<div class="w x t" style="left:3617px;top:528px;width:574px"><span>prefer_nearest</span><i>true</i><u></u></div>
<svg class="img" style="left:3611px;top:544.5px;width:585px;height:855.5px" viewBox="0 0 832 1216"><use href="#girl" width="832" height="1216"/><text class="s1" x="102" y="878" textLength="628" lengthAdjust="spacingAndGlyphs">Download</text><text class="s1" x="318" y="1040" textLength="196" lengthAdjust="spacingAndGlyphs">Me</text></svg>
<div class="cap" style="left:3904px;top:1408px">1248 × 1824</div>
<div class="tag" style="left:3986px;top:245px;width:213px;height:22px;line-height:22px">comfyui_image_metadata_exten...</div>

<!-- Compare -->
<div class="tag" style="left:4806px;top:181px;width:96px;height:19px;line-height:19px">rgthree-comfy</div>
<div style="position:absolute;left:4252.5px;top:202px;width:652.5px;height:1226.5px;background:#333355;box-shadow:2px 2px 3px rgba(0,0,0,.5)"><div style="height:35px;background:#222233;color:#999;font-size:15.7px;line-height:34px;padding-left:60.5px;white-space:nowrap">Compare: Base vs Upscaled</div></div>
<div style="position:absolute;left:4263.5px;top:213px;width:11.5px;height:11.5px;background:#666"></div>
<svg class="ic" style="left:4289px;top:211px;width:16px;height:16px"><use href="#mag" width="16" height="16"/></svg>
<div class="d" style="left:4263.5px;top:252px;background:#64b5f6"></div><div class="l" style="left:4275px;top:252px">image_a</div>
<div class="d" style="left:4263.5px;top:274px;background:#64b5f6"></div><div class="l" style="left:4275px;top:274px">image_b</div>
<svg class="img" style="left:4252.5px;top:382px;width:652.5px;height:952px" viewBox="0 0 832 1216"><use href="#girl" width="832" height="1216"/><text class="s1" x="102" y="878" textLength="628" lengthAdjust="spacingAndGlyphs">Download</text><text class="s1" x="318" y="1040" textLength="196" lengthAdjust="spacingAndGlyphs">Me</text></svg>
</body></html>
